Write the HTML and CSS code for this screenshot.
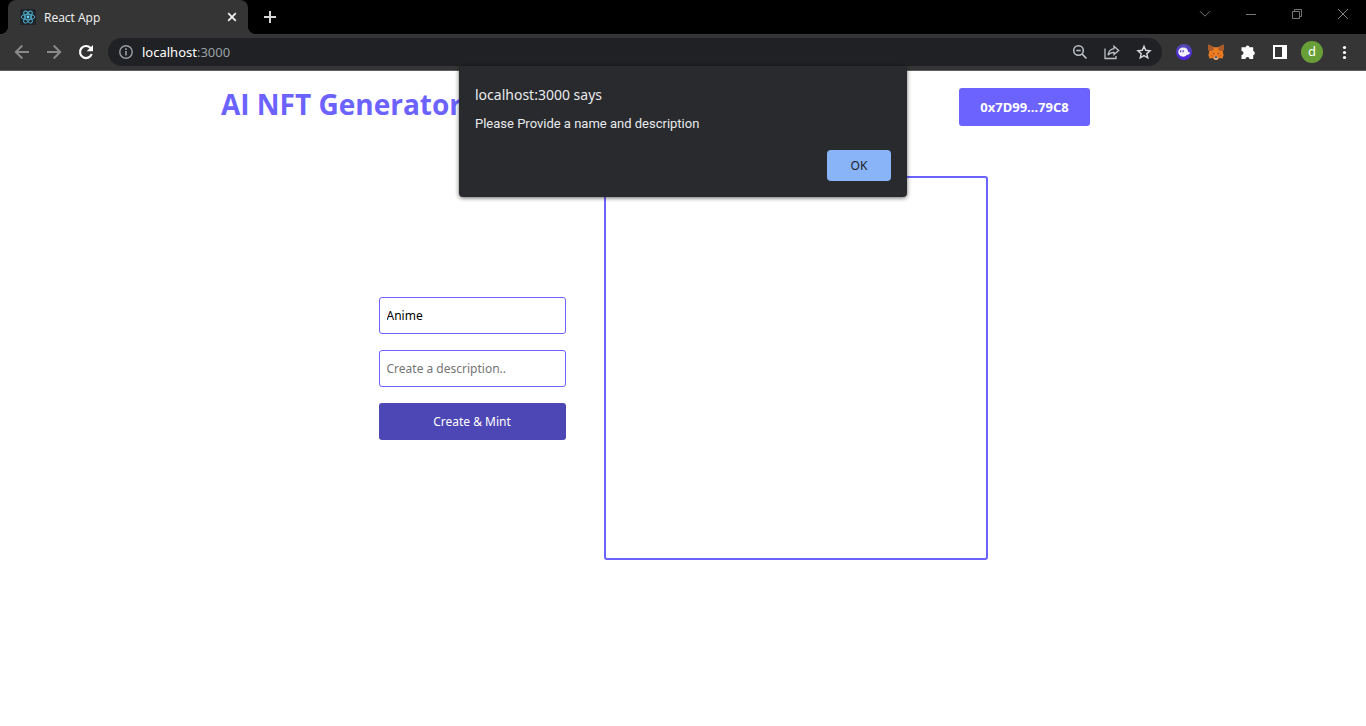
FILE: index.html
```html
<!DOCTYPE html>
<html lang="en">
<head>
<meta charset="utf-8">
<meta name="viewport" content="width=device-width, initial-scale=1">
<title>React App</title>
<link rel="stylesheet" href="styles.css">
</head>
<body>
<div class="browser">
  <div class="tab-strip">
    <div class="tab">
      <svg class="favicon" width="16" height="16" viewBox="0 0 16 16" aria-hidden="true">
        <rect width="16" height="16" rx="2" fill="#20232a"/>
        <g fill="none" stroke="#4fb6d3" stroke-width="0.9">
          <ellipse cx="8" cy="8" rx="6.8" ry="2.7"/>
          <ellipse cx="8" cy="8" rx="6.8" ry="2.7" transform="rotate(60 8 8)"/>
          <ellipse cx="8" cy="8" rx="6.8" ry="2.7" transform="rotate(120 8 8)"/>
        </g>
        <circle cx="8" cy="8" r="1.4" fill="#61dafb"/>
      </svg>
      <span class="tab-title">React App</span>
      <button class="tab-close" type="button" aria-label="Close tab">
        <svg width="16" height="16" viewBox="0 0 16 16"><path d="M4.2 4.2l7.6 7.6M11.8 4.2l-7.6 7.6" stroke="#f1f1f1" stroke-width="1.8"/></svg>
      </button>
    </div>
    <button class="new-tab" type="button" aria-label="New tab">
      <svg width="16" height="16" viewBox="0 0 16 16"><path d="M8 2v12M2 8h12" stroke="#d6d6d6" stroke-width="2"/></svg>
    </button>
    <div class="window-controls">
      <button class="window-btn" type="button" aria-label="Search tabs">
        <svg width="12" height="12" viewBox="0 0 12 12"><path d="M1 3.2l5 5 5-5" fill="none" stroke="#757575"/></svg>
      </button>
      <button class="window-btn" type="button" aria-label="Minimize">
        <svg width="12" height="12" viewBox="0 0 12 12"><path d="M1 6.5h10" stroke="#757575"/></svg>
      </button>
      <button class="window-btn" type="button" aria-label="Restore">
        <svg width="12" height="12" viewBox="0 0 12 12"><path d="M1.500 3.500h7v7h-7zM3.500 3.500v-2h7v7h-2" fill="none" stroke="#757575"/></svg>
      </button>
      <button class="window-btn" type="button" aria-label="Close">
        <svg width="12" height="12" viewBox="0 0 12 12"><path d="M1 1l10 10M11 1L1 11" stroke="#858585"/></svg>
      </button>
    </div>
  </div>

  <div class="toolbar">
    <button class="tool" type="button" aria-label="Back">
      <svg width="16" height="16" viewBox="0 0 16 16"><path d="M15 8H2M8.300 1.500L1.800 8l6.500 6.500" fill="none" stroke="#8a8a8a" stroke-width="1.900"/></svg>
    </button>
    <button class="tool" type="button" aria-label="Forward">
      <svg width="16" height="16" viewBox="0 0 16 16"><path d="M1 8h13M7.700 1.500L14.200 8l-6.500 6.500" fill="none" stroke="#8a8a8a" stroke-width="1.900"/></svg>
    </button>
    <button class="tool" type="button" aria-label="Reload">
      <svg width="16" height="16" viewBox="0 0 16 16"><path d="M13.700 10A6 6 0 1 1 12.500 4" fill="none" stroke="#fff" stroke-width="2.200"/><path d="M15 1v6.300H8.700z" fill="#fff"/></svg>
    </button>
    <div class="address-bar">
      <svg width="16" height="16" viewBox="0 0 16 16" aria-hidden="true"><circle cx="8" cy="8" r="6.200" fill="none" stroke="#9aa0a6" stroke-width="1.400"/><path d="M8 7v4.500M8 4.300V6" stroke="#9aa0a6" stroke-width="1.600"/></svg>
      <div class="url" role="textbox" tabindex="0" aria-label="Address and search bar">localhost<span class="url-port">:3000</span></div>
      <div class="address-actions">
        <button class="tool" type="button" aria-label="Zoom">
          <svg width="16" height="16" viewBox="0 0 16 16"><circle cx="6.500" cy="6.500" r="4.800" fill="none" stroke="#bdc1c6" stroke-width="1.500"/><path d="M4.300 6.500h4.400M9.900 9.900l4.600 4.600" stroke="#bdc1c6" stroke-width="1.600"/></svg>
        </button>
        <button class="tool" type="button" aria-label="Share this page">
          <svg width="16" height="16" viewBox="0 0 16 16"><path d="M1 4.500v10h11v-2.500M10 2.200L14.700 6.500 10 10.600V8.300C7 8.300 5.300 9.200 4 11.200c.4-3.400 2.500-6 6-6.500z" fill="none" stroke="#bdc1c6" stroke-width="1.300"/></svg>
        </button>
        <button class="tool" type="button" aria-label="Bookmark this tab">
          <svg width="16" height="16" viewBox="0 0 16 16"><path d="M8 2.300l1.700 4 4.400.4-3.300 2.900 1 4.300L8 11.600l-3.800 2.300 1-4.300L1.900 6.700l4.400-.4z" fill="none" stroke="#d5d8dc" stroke-width="1.400"/></svg>
        </button>
      </div>
    </div>
    <div class="extensions">
      <button class="tool" type="button" aria-label="Phantom">
        <svg width="16" height="16" viewBox="0 0 16 16"><defs><linearGradient id="ph" x1="0" y1="0" x2="0" y2="1"><stop offset="0" stop-color="#534bb1"/><stop offset="1" stop-color="#4d22e2"/></linearGradient></defs><circle cx="8" cy="8" r="8" fill="url(#ph)"/><path d="M2.300 8c0-2.700 2.200-4.600 5-4.600 3.200 0 4.800 2.100 4.900 4.500.2.800 1.500.2 1.700.6.200 1.700-1.500 2.300-3 2.300-1 1.500-2.300 1.900-3.600 1.900C4.300 12.700 2.300 10.500 2.300 8z" fill="#f3f1ff"/><path d="M4.700 6.300v2M7.100 6.300v2" stroke="#4d30b8" stroke-width="1.200"/></svg>
      </button>
      <button class="tool" type="button" aria-label="MetaMask">
        <svg width="16" height="16" viewBox="0 0 16 16"><path d="M.5.500l5.300 2.800h4.400L15.500.500l.3 4.500-1 3 .8 3-1.200 3.600-3-.6L9.500 15.800h-3L4.600 14l-3 .6L.4 11l.8-3-1-3z" fill="#ee7d22"/><path d="M.5.500l5.300 3.500-.6 2.400-4.200.8-.8-2.200zM15.500.500l-5.300 3.500.6 2.400 4.200.8.800-2.200z" fill="#a85a2b"/><path d="M1.600 11.200l3.400-.2.500 2.600zM14.400 11.200l-3.400-.2-.5 2.600z" fill="#cf6420"/><path d="M4.300 9.200l2-.2-.2 1.200zM11.700 9.200l-2-.2.2 1.200z" fill="#4a4038"/><path d="M5.700 13.200l1-.8h2.600l1 .8-.8 2.200h-3z" fill="#cfc0b4"/><path d="M6.700 12.600h2.600v1.200H6.700z" fill="#25292c"/></svg>
      </button>
      <button class="tool" type="button" aria-label="Extensions">
        <svg width="16" height="16" viewBox="0 0 16 16"><path d="M1.500 3.200h4a2.100 2.100 0 0 1 4.100 0h3.600v3.900a2.100 2.100 0 0 1 0 4.100v3.800H9.500a2 2 0 0 0-4 0h-4v-3.900a2 2 0 0 0 0-4z" fill="#fff"/></svg>
      </button>
      <button class="tool" type="button" aria-label="Side panel">
        <svg width="14" height="14" viewBox="0 0 14 14"><path d="M0 0h14v14H0zM2 2v10h7V2z" fill="#fff" fill-rule="evenodd"/></svg>
      </button>
      <button class="tool" type="button" aria-label="Profile"><span class="avatar">d</span></button>
      <button class="tool" type="button" aria-label="Menu">
        <svg width="16" height="16" viewBox="0 0 16 16" fill="#fff"><circle cx="8.500" cy="3.500" r="1.600"/><circle cx="8.500" cy="8.500" r="1.600"/><circle cx="8.500" cy="13.500" r="1.600"/></svg>
      </button>
    </div>
  </div>
</div>

<div class="page">
  <nav class="nav">
    <h1 class="brand">AI NFT Generator</h1>
    <button class="account" type="button">0x7D99...79C8</button>
  </nav>
  <main class="content">
    <form class="form">
      <input class="field" type="text" value="Anime" aria-label="Name">
      <input class="field" type="text" placeholder="Create a description.." aria-label="Description">
      <button class="submit" type="button">Create &amp; Mint</button>
    </form>
    <div class="preview"></div>
  </main>
</div>

<dialog class="alert" open aria-labelledby="alert-title">
  <h2 class="alert-title" id="alert-title">localhost:3000 says</h2>
  <p class="alert-message">Please Provide a name and description</p>
  <button class="alert-ok" type="button">OK</button>
</dialog>
</body>
</html>
```
FILE: styles.css
```css
* {
  box-sizing: border-box;
}

body {
  margin: 0;
  background: #fff;
  font-family: "Noto Sans", "Open Sans", sans-serif;
}

button {
  padding: 0;
  border: 0;
  background: none;
  font-family: inherit;
}

svg {
  display: block;
  flex: none;
}

.tab-strip {
  display: flex;
  height: 34px;
  padding-left: 8px;
  background: #000;
}

.tab {
  position: relative;
  display: flex;
  align-items: center;
  gap: 8px;
  width: 240px;
  padding: 0 8px 0 12px;
  border-radius: 8px 8px 0 0;
  background: #353535;
  color: #f5f5f5;
  font-family: "Open Sans", sans-serif;
  font-size: 12px;
}

.tab::before,
.tab::after {
  content: "";
  position: absolute;
  bottom: 0;
  width: 8px;
  height: 8px;
}

.tab::before {
  left: -8px;
  background: radial-gradient(circle at 0 0, #000 8px, #353535 8px);
}

.tab::after {
  right: -8px;
  background: radial-gradient(circle at 100% 0, #000 8px, #353535 8px);
}

.tab-title {
  flex: 1;
}

.new-tab {
  display: grid;
  place-items: center;
  width: 28px;
  margin-left: 8px;
}

.window-controls {
  display: flex;
  height: 28px;
  margin-left: auto;
}

.window-btn {
  display: grid;
  place-items: center;
  width: 46px;
}

.toolbar {
  display: flex;
  align-items: center;
  height: 37px;
  padding: 0 6px;
  border-bottom: 1px solid #5c5c5c;
  background: #353535;
}

.tool {
  display: grid;
  place-items: center;
  width: 32px;
  height: 28px;
}

.address-bar {
  display: flex;
  flex: 1;
  align-items: center;
  gap: 8px;
  height: 28px;
  margin: 0 6px;
  padding: 0 2px 0 10px;
  border-radius: 14px;
  background: #202124;
}

.url {
  flex: 1;
  color: #fff;
  font-size: 13px;
}

.url-port {
  color: #9aa0a6;
}

.address-actions,
.extensions {
  display: flex;
}

.avatar {
  width: 22px;
  height: 22px;
  border-radius: 50%;
  background: #689f38;
  color: #fff;
  font-size: 13px;
  line-height: 21px;
}

.nav {
  display: grid;
  grid-template-columns: 1fr 1fr;
  justify-items: center;
  align-items: start;
  padding: 17px 0;
}

.brand {
  margin: 0;
  color: #6c63ff;
  font-family: "Open Sans", sans-serif;
  font-size: 28px;
  line-height: 32px;
}

.account {
  width: 131px;
  height: 38px;
  border-radius: 3px;
  background: #6c63ff;
  color: #fff;
  font-size: 13px;
  font-weight: 700;
}

.content {
  display: flex;
  justify-content: center;
  align-items: center;
  gap: 38px;
  padding: 33px 0;
}

.form {
  display: grid;
  gap: 16px;
  width: 187px;
}

.field,
.submit {
  width: 100%;
  height: 37px;
  border-radius: 3px;
  font-family: "Noto Sans", "Open Sans", sans-serif;
  font-size: 12px;
}

.field {
  padding: 0 7px;
  border: 1px solid #6c63ff;
  background: #fff;
  color: #000;
}

.field::placeholder {
  color: #757575;
}

.submit {
  background: #4d46b5;
  color: #fff;
}

.preview {
  width: 384px;
  aspect-ratio: 1;
  border: 2px solid #6c63ff;
  border-radius: 3px;
}

.alert {
  position: absolute;
  top: 66px;
  right: 0;
  left: 0;
  width: 448px;
  margin: 0 auto;
  padding: 16px;
  border: 0;
  border-radius: 4px;
  background: #292a2d;
  color: #e8eaed;
  box-shadow: 0 1px 4px rgba(0, 0, 0, 0.6);
}

.alert-title {
  margin: 0;
  font-size: 14px;
  font-weight: 400;
  line-height: 26px;
}

.alert-message {
  margin: 6px 0 16px;
  font-family: Roboto, "Open Sans", sans-serif;
  font-size: 13px;
  line-height: 20px;
}

.alert-ok {
  display: block;
  width: 64px;
  height: 31px;
  margin-left: auto;
  border-radius: 4px;
  background: #8ab4f8;
  color: #202124;
  font-size: 12px;
}
```
